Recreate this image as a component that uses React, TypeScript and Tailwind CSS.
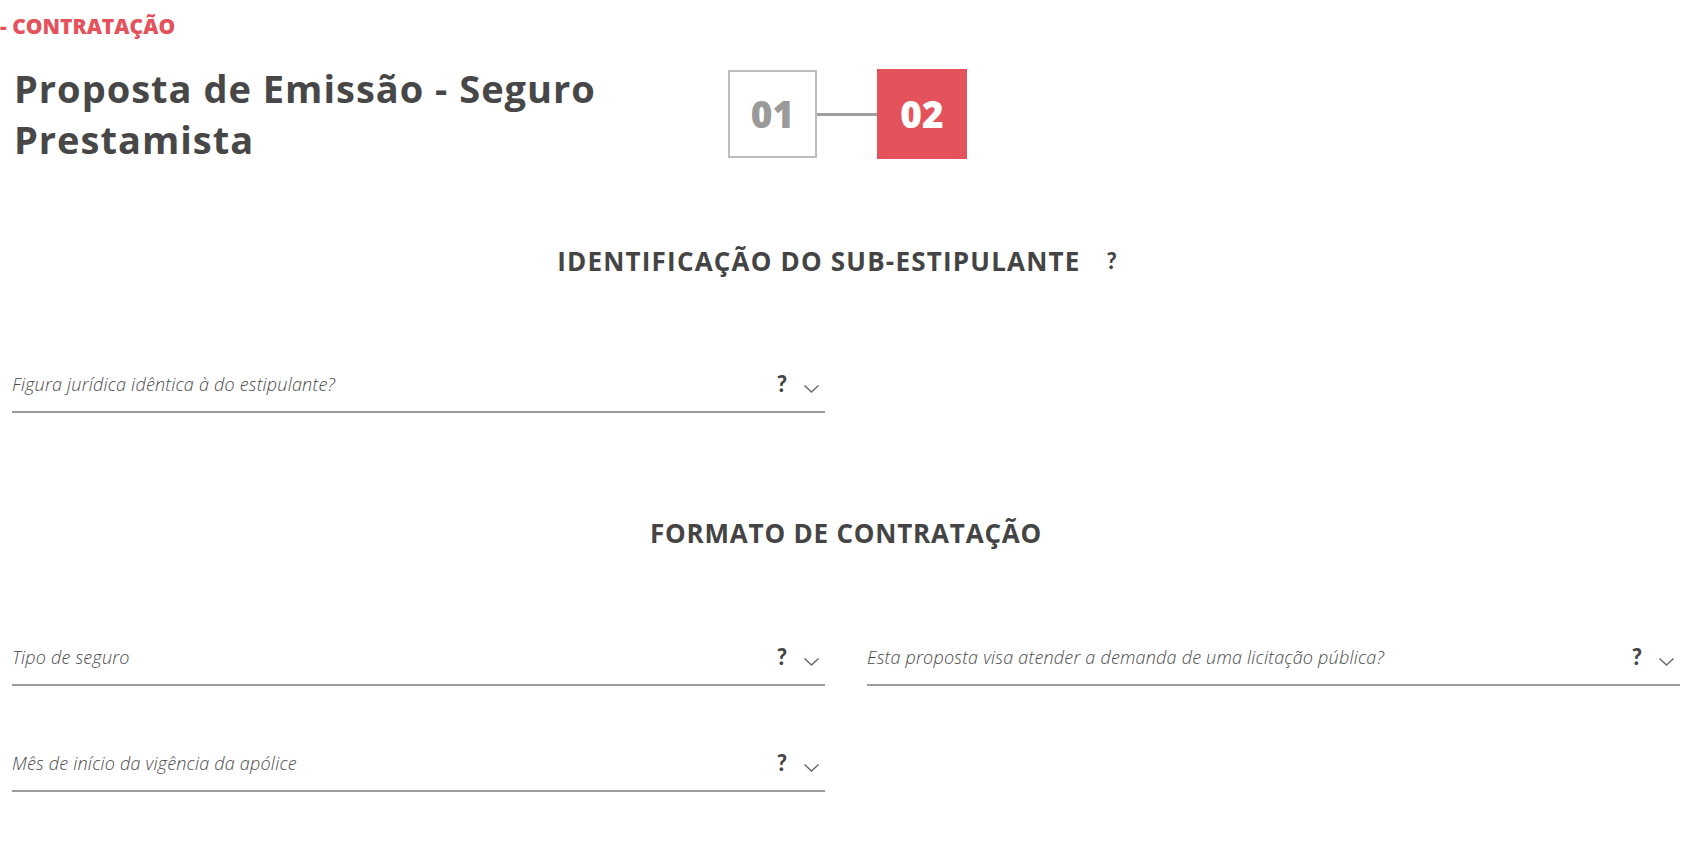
import React from "react";

const Chevron = () => (
  <svg width="17" height="10" viewBox="0 0 17 10" className="ml-[16px] mt-[10px]">
    <polyline points="1.5,1.5 8.5,8 15.5,1.5" fill="none" stroke="#6b6b6b" strokeWidth="1.5" />
  </svg>
);

interface FieldProps {
  label: string;
}

const SelectField: React.FC<FieldProps> = ({ label }) => (
  <div className="flex items-center border-b-2 border-[#9c9c9c] pb-[15px] pr-[5px]">
    <span className="flex-1 text-[18px] leading-[24px] italic font-light tracking-[0.2px] text-[#4a4a4a] font-['Open_Sans',sans-serif]">
      {label}
    </span>
    <span className="text-[22px] leading-[24px] font-black text-[#444] font-['Lato',sans-serif]">?</span>
    <Chevron />
  </div>
);

const App: React.FC = () => {
  return (
    <div className="min-h-screen bg-white pl-[12px] pr-[22px] pt-[14px] font-['Open_Sans',sans-serif]">
      <div className="text-[21px] leading-[24px] font-extrabold text-[#e4525b] -ml-[12px]">
        - CONTRATAÇÃO
      </div>

      <div className="mt-[25px] flex items-center">
        <h1 className="w-[716px] pl-[2px] text-[38px] leading-[51px] font-bold tracking-[1px] text-[#474747]">
          Proposta de Emissão - Seguro
          <br />
          Prestamista
        </h1>
        <div className="flex items-center">
          <div className="flex h-[88px] w-[89px] items-center justify-center border-2 border-[#bdbdbd] text-[37px] font-extrabold text-[#9a9a9a]">
            01
          </div>
          <div className="h-[3px] w-[60px] bg-[#9e9e9e]" />
          <div className="flex h-[90px] w-[90px] items-center justify-center bg-[#e4525b] text-[37px] font-extrabold text-white">
            02
          </div>
        </div>
      </div>

      <div className="mt-[80px] flex justify-center pr-[18px]">
        <h2 className="text-[26px] leading-[32px] font-bold tracking-[1.2px] text-[#444]">
          IDENTIFICAÇÃO DO SUB-ESTIPULANTE
        </h2>
        <span className="ml-[26px] text-[22px] leading-[32px] font-black text-[#444] font-['Lato',sans-serif]">?</span>
      </div>

      <div className="mt-[95px] grid grid-cols-2 gap-x-[42px]">
        <SelectField label="Figura jurídica idêntica à do estipulante?" />
      </div>

      <div className="mt-[104px] flex justify-center">
        <h2 className="text-[26px] leading-[32px] font-bold tracking-[0.8px] text-[#444]">
          FORMATO DE CONTRATAÇÃO
        </h2>
      </div>

      <div className="mt-[96px] grid grid-cols-2 gap-x-[42px] gap-y-[65px]">
        <SelectField label="Tipo de seguro" />
        <SelectField label="Esta proposta visa atender a demanda de uma licitação pública?" />
        <SelectField label="Mês de início da vigência da apólice" />
      </div>
    </div>
  );
};

export default App;
